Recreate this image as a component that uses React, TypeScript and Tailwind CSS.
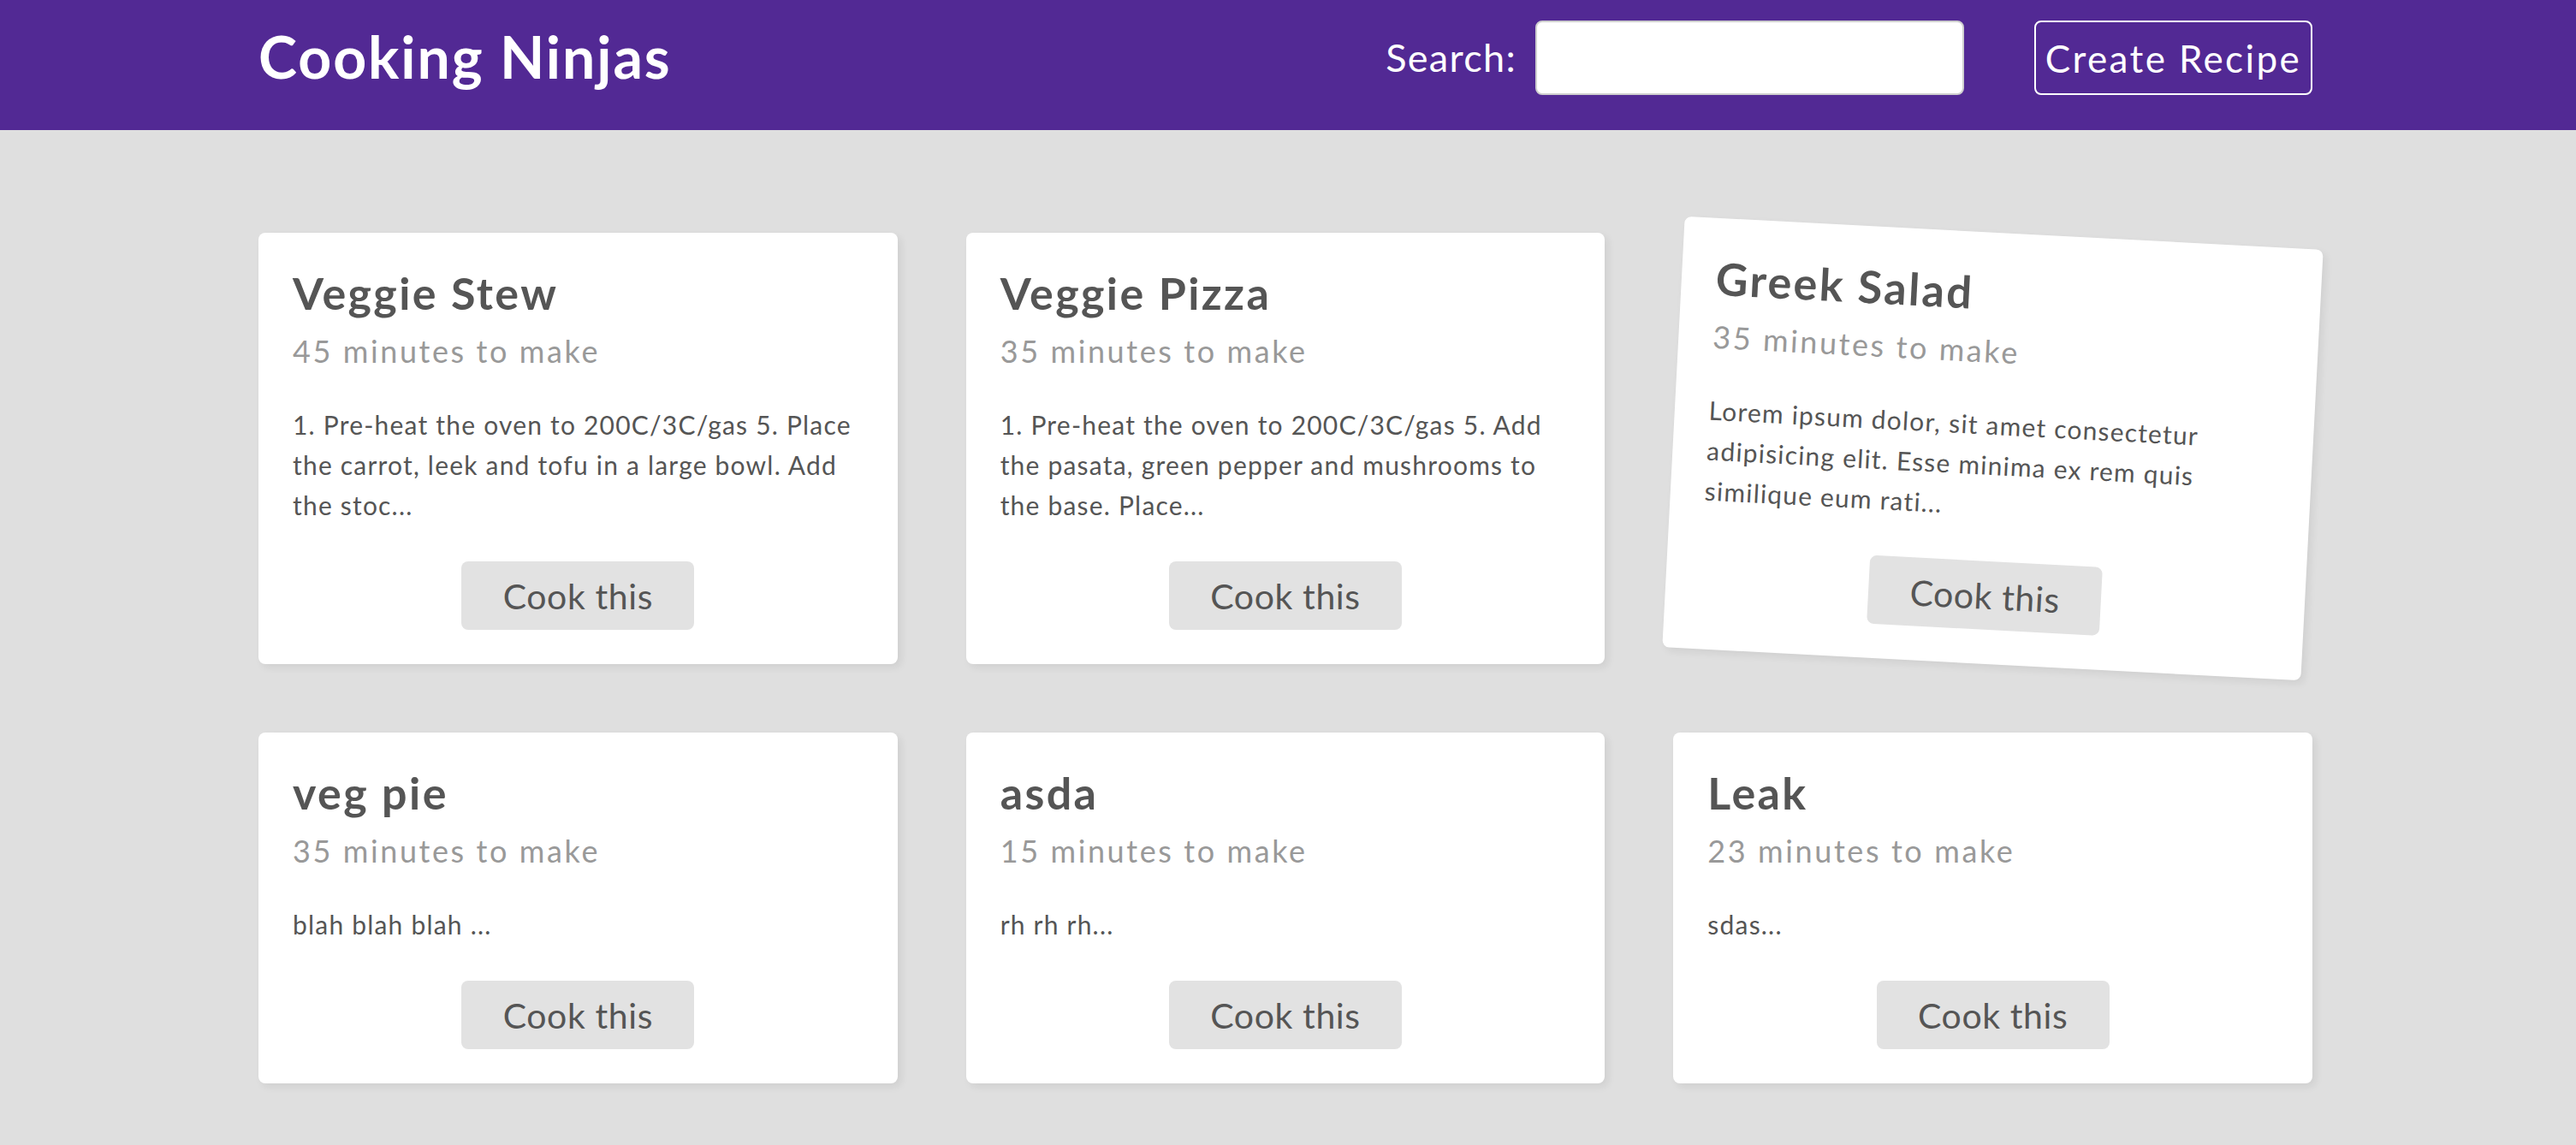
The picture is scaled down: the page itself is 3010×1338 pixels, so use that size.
import React from "react";

type Recipe = { title: string; time: string; method: string };

const recipes: Recipe[] = [
  {
    title: "Veggie Stew",
    time: "45 minutes to make",
    method:
      "1. Pre-heat the oven to 200C/3C/gas 5. Place the carrot, leek and tofu in a large bowl. Add the stoc...",
  },
  {
    title: "Veggie Pizza",
    time: "35 minutes to make",
    method:
      "1. Pre-heat the oven to 200C/3C/gas 5. Add the pasata, green pepper and mushrooms to the base. Place...",
  },
  {
    title: "Greek Salad",
    time: "35 minutes to make",
    method:
      "Lorem ipsum dolor, sit amet consectetur adipisicing elit. Esse minima ex rem quis similique eum rati...",
  },
  { title: "veg pie", time: "35 minutes to make", method: "blah blah blah ..." },
  { title: "asda", time: "15 minutes to make", method: "rh rh rh..." },
  { title: "Leak", time: "23 minutes to make", method: "sdas..." },
];

function Card({ r, tilted }: { r: Recipe; tilted?: boolean }) {
  return (
    <div
      className={
        "bg-white rounded-[8px] px-[40px] pt-[40px] pb-[40px] flex flex-col shadow-[4px_4px_10px_rgba(0,0,0,0.07)] " +
        (tilted ? "rotate-3" : "")
      }
    >
      <h3 className="text-[#555] text-[52px] leading-[60px] font-bold tracking-[2.4px]">{r.title}</h3>
      <p className="mt-[16px] text-[#999] text-[36px] leading-[44px] tracking-[2.6px]">{r.time}</p>
      <div className="mt-[41px] text-[#555] text-[30px] leading-[47px] tracking-[1.2px]">{r.method}</div>
      <a className="mt-[42px] mx-auto w-[272px] h-[80px] flex items-center justify-center bg-[#e2e2e2] rounded-[8px] text-[#555] text-[41px] leading-[41px] tracking-[0.6px] cursor-pointer">
        Cook this
      </a>
    </div>
  );
}

export default function App() {
  return (
    <div className="min-h-screen bg-[#dfdfdf] font-['Lato',sans-serif]">
      <nav className="bg-[#522994] h-[152px] pt-[24px]">
        <div className="max-w-[2406px] pr-[6px] mx-auto h-[87px] flex items-center">
          <h1 className="-mt-[4px] mr-auto text-white text-[68px] leading-[64px] font-bold tracking-[1.9px]">
            Cooking Ninjas
          </h1>
          <label className="flex items-center gap-[22px] text-white text-[45px] leading-[45px] tracking-[1.3px]">
            <span>Search:</span>
            <input
              type="text"
              className="w-[501px] h-[87px] bg-white rounded-[8px] border-2 border-[#cfcfcf] outline-none px-[12px] text-[36px]"
            />
          </label>
          <button className="ml-[82px] w-[325px] h-[87px] border-2 border-white rounded-[8px] text-white text-[44px] leading-[44px] tracking-[2.4px]">
            Create Recipe
          </button>
        </div>
      </nav>
      <main className="max-w-[2406px] pr-[6px] mx-auto pt-[120px] pb-[80px] grid grid-cols-3 gap-[80px]">
        {recipes.map((r, i) => (
          <Card key={r.title} r={r} tilted={i === 2} />
        ))}
      </main>
    </div>
  );
}
